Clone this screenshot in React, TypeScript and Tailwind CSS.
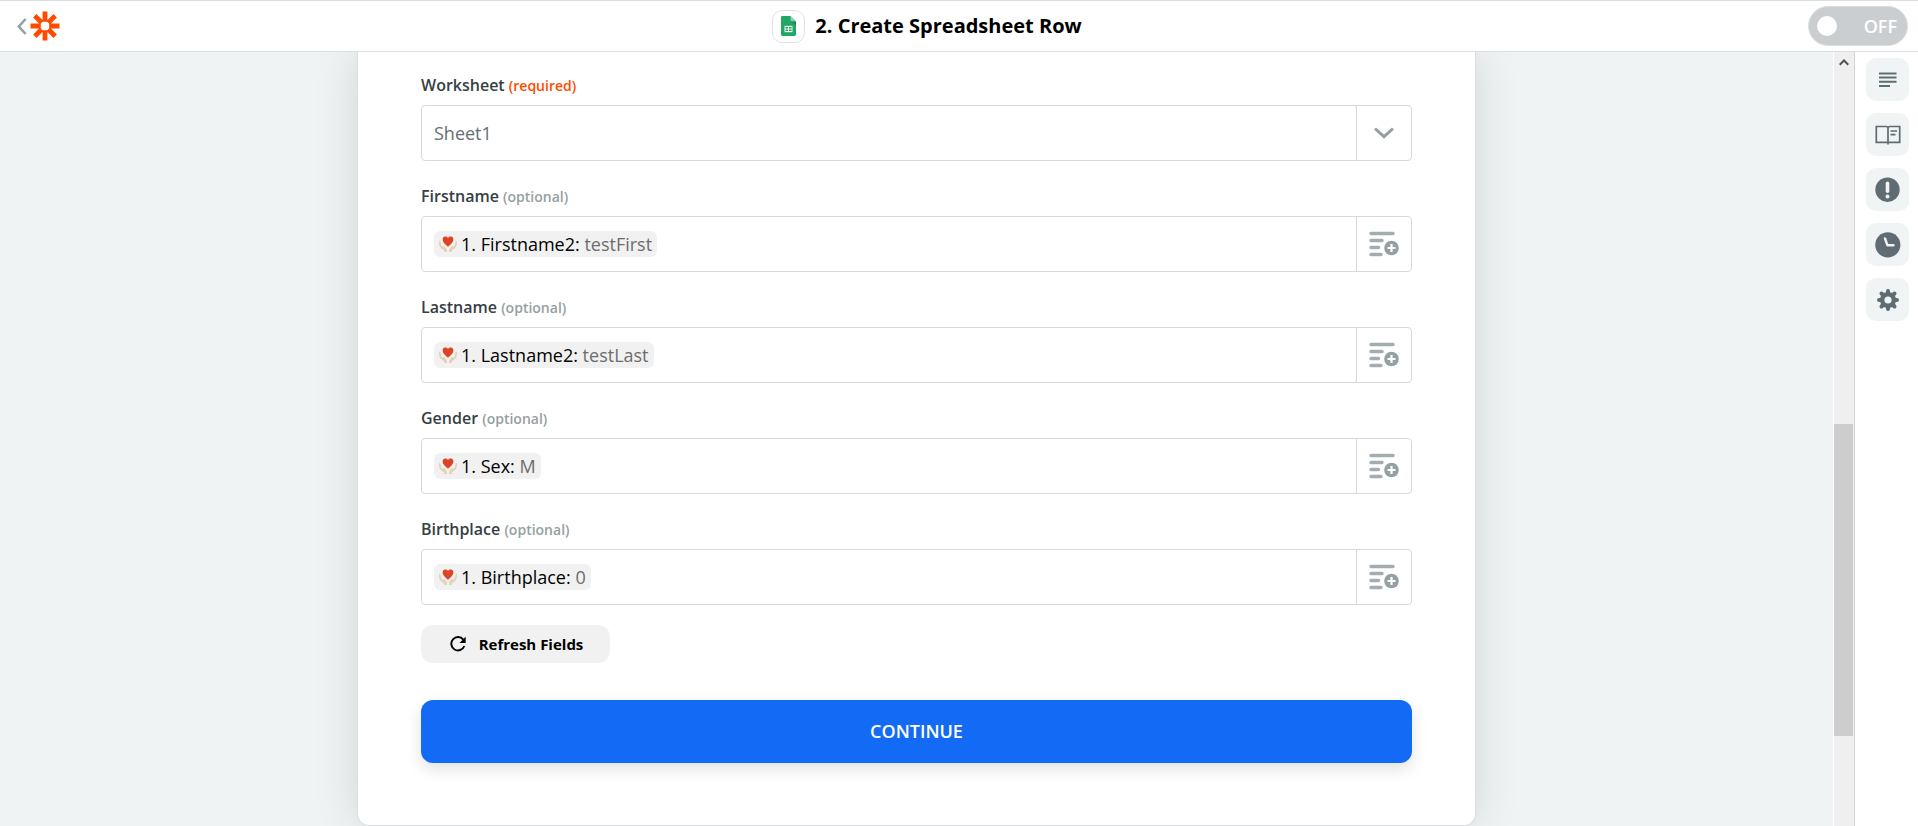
import React from "react";

type MappedField = {
  id: string;
  label: string;
  source: string;
  sample: string;
};

const FIELDS: MappedField[] = [
  { id: "firstname", label: "Firstname", source: "1. Firstname2:", sample: "testFirst" },
  { id: "lastname", label: "Lastname", source: "1. Lastname2:", sample: "testLast" },
  { id: "gender", label: "Gender", source: "1. Sex:", sample: "M" },
  { id: "birthplace", label: "Birthplace", source: "1. Birthplace:", sample: "0" },
];

function BackIcon() {
  return (
    <svg width="10" height="17" viewBox="0 0 10 17" fill="none" stroke="#95a0a3" strokeWidth="2.6" aria-hidden="true">
      <path d="M8.6 1 1.8 8.5 8.6 16" />
    </svg>
  );
}

function StarLogo() {
  return (
    <svg width="30" height="30" viewBox="0 0 30 30" stroke="#ff4a00" strokeWidth="4.8" aria-hidden="true">
      <path d="M15 .5v10.3M15 19.2v10.3M.5 15h10.3M19.2 15h10.3M4.8 4.8l7 7M18.2 18.2l7 7M25.2 4.8l-7 7M11.8 18.2l-7 7" />
      <rect x="11.3" y="11.3" width="7.4" height="7.4" rx="1.6" fill="#fff" stroke="none" />
    </svg>
  );
}

function SheetsIcon() {
  return (
    <svg width="15" height="20" viewBox="0 0 15 20" aria-hidden="true">
      <path d="M1.4 0H9.5L15 5.4V18.6A1.4 1.4 0 0 1 13.6 20H1.4A1.4 1.4 0 0 1 0 18.6V1.4A1.4 1.4 0 0 1 1.4 0Z" fill="#23a566" />
      <path d="M9.5 0 15 5.4H10.9A1.4 1.4 0 0 1 9.5 4Z" fill="#8ed1b1" />
      <path d="M10 5.4h5v4.4Z" fill="#1c8f57" />
      <path d="M3.5 9.8h8v6.4h-8Z" fill="#e9f6f0" />
      <path d="M4.5 11h2.6v1.5H4.5ZM8 11h2.6v1.5H8ZM4.5 13.5h2.6V15H4.5ZM8 13.5h2.6V15H8Z" fill="#23a566" />
    </svg>
  );
}

function HeartHandsIcon() {
  return (
    <svg width="18" height="17" viewBox="0 0 18 17" aria-hidden="true">
      <path d="M9 10.8C6.300 8.600 3.600 6.300 3.600 3.600A2.900 2.900 0 0 1 9 1.900a2.900 2.900 0 0 1 5.400 1.700C14.400 6.300 11.700 8.600 9 10.800Z" fill="#dd4425" />
      <path d="M.4 4.800c.7 0 1 .6 1.200 1.700l.7 2.900 1.700 1.300c.5-.6 1.300-.4 1.900.2l1.500 1.900c.5.7.6 1.200.6 2V16H5.300v-1.400L2 12C.6 10.800 0 8.800 0 6Z" fill="#e8cfb0" />
      <path d="M17.600 4.800c-.7 0-1 .6-1.200 1.700l-.7 2.900-1.700 1.300c-.5-.6-1.300-.4-1.900.2l-1.500 1.900c-.5.7-.6 1.200-.6 2V16h2.700v-1.400L16 12c1.400-1.200 2-3.200 2-6Z" fill="#e8cfb0" />
    </svg>
  );
}

function InsertIcon() {
  return (
    <svg width="30" height="26" viewBox="0 0 30 26" aria-hidden="true">
      <path d="M2 2.500h22M2 9.500h11M2 16.500h7.500M2 23.500h10" stroke="#a3acaf" strokeWidth="3.400" strokeLinecap="round" />
      <circle cx="22.500" cy="17" r="7.300" fill="#95a0a3" />
      <path d="M22.500 13v8M18.500 17h8" stroke="#fff" strokeWidth="2.200" />
    </svg>
  );
}

function RefreshIcon() {
  return (
    <svg width="16" height="16" viewBox="0 0 16 16" aria-hidden="true">
      <path d="M13.300 3.600A6.700 6.700 0 1 0 14.300 10" fill="none" stroke="#000" strokeWidth="1.900" />
      <path d="M15.700.8V7H9.500Z" fill="#000" />
    </svg>
  );
}

function TextIcon() {
  return (
    <svg width="18" height="16" viewBox="0 0 18 16" aria-hidden="true">
      <path d="M0 1.500h17.500M0 5.500h17.500M0 9.700h17.500M0 14h11" stroke="#5f6c72" strokeWidth="2" />
    </svg>
  );
}

function BookIcon() {
  return (
    <svg width="26" height="20" viewBox="0 0 26 20" fill="none" stroke="#5f6c72" strokeWidth="1.700" aria-hidden="true">
      <path d="M13 19.500V2.300L11.500 1.500H1.300V17.300H24.700V1.500H14.500L13 2.300M15.500 6H22M15.500 9.700h5" />
    </svg>
  );
}

function AlertIcon() {
  return (
    <svg width="26" height="26" viewBox="0 0 26 26" aria-hidden="true">
      <circle cx="12.500" cy="12.700" r="12.200" fill="#5f6c72" />
      <path d="M12.500 6.200v8" stroke="#f0f4f5" strokeWidth="3.600" strokeLinecap="round" />
      <circle cx="12.500" cy="19.400" r="2" fill="#f0f4f5" />
    </svg>
  );
}

function ClockIcon() {
  return (
    <svg width="26" height="26" viewBox="0 0 26 26" aria-hidden="true">
      <circle cx="12.800" cy="12.800" r="12.600" fill="#5f6c72" />
      <path d="M10 6.500l2.500 6.800h6" fill="none" stroke="#f0f4f5" strokeWidth="2.400" strokeLinecap="round" strokeLinejoin="round" />
    </svg>
  );
}

function GearIcon() {
  return (
    <svg width="22" height="22" viewBox="-11 -11 22 22" aria-hidden="true">
      <circle r="8" fill="#5f6c72" />
      <path
        d="M0-9V9M-9 0H9M-6.500-6.500l13 13M6.500-6.500l-13 13"
        stroke="#5f6c72"
        strokeWidth="4"
        strokeLinecap="round"
      />
      <circle r="3.600" fill="#f0f4f5" />
    </svg>
  );
}

const TOOLS = [
  { name: "Outline", icon: <TextIcon /> },
  { name: "Guide", icon: <BookIcon /> },
  { name: "Alerts", icon: <AlertIcon /> },
  { name: "History", icon: <ClockIcon /> },
  { name: "Settings", icon: <GearIcon /> },
];

function Header() {
  return (
    <header className="flex h-[52px] items-center border-y border-[#d9dee0] bg-white pr-[10px]">
      <a href="#" aria-label="Back to dashboard" className="flex w-[60px] items-center gap-[3px] pl-[17px]">
        <BackIcon />
        <StarLogo />
      </a>
      <div className="flex flex-1 items-center justify-center gap-[10px]">
        <span className="flex h-[33px] w-[33px] items-center justify-center rounded-[10px] border border-[#dfe3e5]">
          <SheetsIcon />
        </span>
        <h1 className="text-[20px] leading-7 font-bold text-black">2. Create Spreadsheet Row</h1>
      </div>
      <label className="ml-[14px] flex h-10 w-[100px] cursor-pointer items-center justify-between rounded-full border border-[#dcdfe0] bg-[#caced0] pr-[10px] pl-2">
        <input type="checkbox" role="switch" aria-label="Zap power" className="sr-only" />
        <span className="h-5 w-5 rounded-full bg-white" />
        <span className="text-[18px] leading-6 font-semibold text-white">OFF</span>
      </label>
    </header>
  );
}

function FieldLabel({ id, text, required }: { id: string; text: string; required?: boolean }) {
  return (
    <label htmlFor={id} className="block pb-2 text-[16px] leading-6 font-semibold text-[#354044]">
      {text}{" "}
      <span className={required ? "text-[14px] leading-4 text-[#ff4a00]" : "text-[14px] leading-4 text-[#95a0a3]"}>
        {required ? "(required)" : "(optional)"}
      </span>
    </label>
  );
}

function WorksheetField() {
  return (
    <div>
      <FieldLabel id="worksheet" text="Worksheet" required />
      <div className="grid h-14 grid-cols-[1fr_55px] rounded-[4px] border border-[#d4dadc]">
        <select
          id="worksheet"
          className="col-span-2 col-start-1 row-start-1 appearance-none bg-transparent px-3 text-[18px] text-[#666e71] outline-none"
        >
          <option>Sheet1</option>
        </select>
        <span className="pointer-events-none col-start-2 row-start-1 flex items-center justify-center border-l border-[#d4dadc]">
          <svg width="20" height="12" viewBox="0 0 20 12" fill="none" stroke="#95a0a3" strokeWidth="3" aria-hidden="true">
            <path d="M1 1.500 10 9.700 19 1.500" />
          </svg>
        </span>
      </div>
    </div>
  );
}

function MappedInput({ field }: { field: MappedField }) {
  return (
    <div>
      <FieldLabel id={field.id} text={field.label} />
      <div className="flex h-14 rounded-[4px] border border-[#d4dadc]">
        <div className="flex min-w-0 flex-1 items-center pl-3">
          <span className="flex h-[26px] items-center gap-1 rounded-[6px] bg-[#f1f1f1] px-[5px] text-[18px] leading-6 whitespace-nowrap">
            <HeartHandsIcon />
            <span className="text-[#6c6c6c]">
              <span className="font-medium text-black">{field.source}</span> {field.sample}
            </span>
          </span>
          <input id={field.id} type="text" className="h-full min-w-0 flex-1 bg-transparent px-1 outline-none" />
        </div>
        <button
          type="button"
          aria-label={"Insert data into " + field.label}
          className="flex w-[55px] items-center justify-center border-l border-[#d4dadc]"
        >
          <InsertIcon />
        </button>
      </div>
    </div>
  );
}

function ScrollTrack() {
  return (
    <div className="flex w-[21px] flex-col border-l border-white bg-[#efefef] pr-px" aria-hidden="true">
      <div className="flex flex-[372_0_0px] justify-center">
        <svg className="mt-[7px]" width="10" height="7" viewBox="0 0 10 7" fill="none" stroke="#505050" strokeWidth="2">
          <path d="M.7 5.800 5 1.500 9.300 5.800" />
        </svg>
      </div>
      <div className="flex-[312_0_0px] bg-[#cdcdcd]" />
      <div className="flex-[90_0_0px]" />
    </div>
  );
}

export default function App() {
  return (
    <div className="flex min-h-screen flex-col bg-[#eff3f4] font-['Open_Sans','Noto_Sans',sans-serif]">
      <Header />
      <div className="flex flex-1">
        <main className="flex-1 overflow-hidden">
          <form
            className="mx-auto flex max-w-[1119px] flex-col rounded-b-[12px] border border-t-0 border-[#d9dee0] bg-white px-[63px] pt-[21px] pb-[62px] shadow-[0_0_45px_rgba(0,0,0,0.12)]"
            onSubmit={(e) => e.preventDefault()}
          >
            <div className="flex flex-col gap-[23px]">
              <WorksheetField />
              {FIELDS.map((field) => (
                <MappedInput key={field.id} field={field} />
              ))}
            </div>
            <button
              type="button"
              className="mt-5 flex h-[38px] w-[189px] items-center justify-center gap-[13px] rounded-[12px] bg-[#f1f1f1] pl-0.5 text-[15px] font-bold text-black"
            >
              <RefreshIcon />
              Refresh Fields
            </button>
            <button
              type="submit"
              className="mt-[37px] h-[63px] rounded-[12px] bg-[#136bf5] text-[18px] font-semibold text-white shadow-[0_6px_16px_rgba(0,0,0,0.12)]"
            >
              CONTINUE
            </button>
          </form>
        </main>
        <ScrollTrack />
        <aside className="flex w-16 flex-col items-center gap-3 border-l border-[#d4d7d8] bg-white pt-[6px] pl-0.5">
          {TOOLS.map((tool) => (
            <button
              key={tool.name}
              type="button"
              aria-label={tool.name}
              className="flex h-[43px] w-[43px] items-center justify-center rounded-[10px] bg-[#f0f4f5]"
            >
              {tool.icon}
            </button>
          ))}
        </aside>
      </div>
    </div>
  );
}
